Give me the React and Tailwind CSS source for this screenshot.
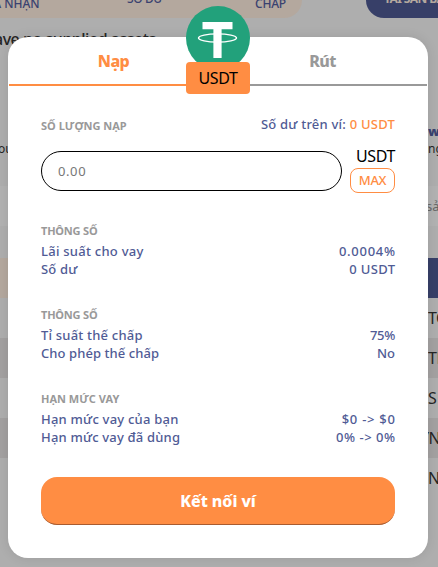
const rows = [
  { name: 'TO', shaded: false },
  { name: 'TH', shaded: true },
  { name: 'SU', shaded: false, spaced: true },
  { name: 'YN', shaded: true, clipped: true },
  { name: 'NE', shaded: false },
];

function Backdrop() {
  return (
    <div className="h-[567px] w-[438px] overflow-hidden whitespace-nowrap bg-[#aeaeae] text-[#252525]">
      <div className="flex h-[18px] justify-between overflow-hidden text-[12px] font-medium leading-[14px] text-[#3a4270]">
        <div className="flex h-[18px] w-[302px] rounded-br-[18px] bg-[#b4a89e]">
          <span className="-ml-[16px] -mt-[3px] w-[143px]">OÁ NHẬN</span>
          <span className="-mt-[8px] w-[128px] tracking-[-0.4px]">SỐ DƯ</span>
          <span className="-mt-[3px] tracking-[-0.2px]">CHẤP</span>
        </div>
        <div className="h-[18px] w-[72px] rounded-bl-[18px] bg-[#373f68] pl-[18px] font-bold text-[#b4a89e]">
          <span className="-mt-[8px] block tracking-[-0.6px]">TÀI SẢN BẢO</span>
        </div>
      </div>
      <div className="h-[105px] pt-[10px] text-[16px] font-medium leading-[22px]">
        <span className="-ml-[6px] tracking-[-0.48px]">ave no supplied assets</span>
      </div>
      <div className="flex h-[63px] justify-between text-[12px] leading-[17px]">
        <span className="-ml-[2px] pt-[17px]">ou</span>
        <div className="w-[10px]">
          <div className="text-[13px] font-black text-[#3a4270]">wi</div>
          <div>ng</div>
        </div>
      </div>
      <div className="h-10 bg-[#b2b2b2] pl-[426px] text-[13px] leading-10 text-[#666]">sản</div>
      <div className="h-8" />
      <div className="flex h-10">
        <div className="w-[219px] bg-[#b4a89e]" />
        <div className="flex-1 bg-[#373f68]" />
      </div>
      {rows.map((row) => (
        <div
          key={row.name}
          className={`h-10 text-[16px] leading-10 ${row.spaced ? 'tracking-[1px]' : 'tracking-[-0.5px]'} ${row.shaded ? 'bg-[#a3a1a1]' : ''} ${row.clipped ? 'pl-[420px]' : 'pl-[428px]'}`}
        >
          {row.name}
        </div>
      ))}
    </div>
  );
}

function Section({ title, titleClass = 'tracking-[-0.2px]', lines }) {
  return (
    <section className="h-[84px] text-[13px] font-medium leading-[18px] text-[#505b95]">
      <h3 className={`mb-[2px] text-[11px] font-bold leading-[18px] text-[#999] ${titleClass}`}>{title}</h3>
      {lines.map(([label, value, labelClass, valueClass]) => (
        <div key={label} className="flex justify-between">
          <span className={labelClass}>{label}</span>
          <span className={valueClass}>{value}</span>
        </div>
      ))}
    </section>
  );
}

function TokenBadge() {
  return (
    <div className="absolute left-[178px] top-[-31px] w-16">
      <svg className="block h-16 w-16" viewBox="0 0 64 64">
        <circle cx="32" cy="32" r="32" fill="#22a17b" />
        <ellipse cx="31.5" cy="32" rx="19" ry="4.1" fill="none" stroke="#fff" strokeWidth="1.4" />
        <path d="M16.5 16h30v7.2H35.6V52h-8.2V23.2H16.5z" fill="#fff" />
      </svg>
      <div className="relative -mt-2 h-8 rounded-[4px] bg-[#ff8d43] text-center text-[16px] leading-8 tracking-[-0.4px] text-black">USDT</div>
    </div>
  );
}

export default function App() {
  return (
    <div className="relative h-[567px] w-[438px] overflow-hidden font-['Noto_Sans','Open_Sans',sans-serif]">
      <Backdrop />
      <div className="absolute left-2 top-[37px] h-[521px] w-[420px] whitespace-nowrap rounded-[20px] bg-white shadow-[0_0_12px_rgba(0,0,0,0.1)]">
        <div className="mx-px flex h-[49px] text-center text-[16px] font-extrabold leading-[49px] tracking-[-0.6px]">
          <div className="flex-1 border-b-2 border-[#ff8d43] text-[#ff8d43]">Nạp</div>
          <div className="flex-1 border-b-2 border-[#999] text-[#999]">Rút</div>
        </div>
        <TokenBadge />
        <div className="px-[33px]">
          <div className="mt-[29px] flex h-[20px] justify-between">
            <span className="pt-[2px] text-[11px] font-bold leading-[18px] tracking-[0.02px] text-[#999]">SỐ LƯỢNG NẠP</span>
            <span className="text-[13px] font-medium leading-[19px] tracking-[0.22px] text-[#505b95]">
              Số dư trên ví: <span className="text-[#ff8d43]">0 USDT</span>
            </span>
          </div>
          <div className="mt-[16px] flex h-10 justify-between">
            <input
              className="h-10 w-[301px] rounded-[20px] border border-black px-4 text-[13px] tracking-[0.6px] outline-none placeholder:text-[#777]"
              placeholder="0.00"
            />
            <div className="flex flex-col items-end">
              <span className="-mt-[6px] h-[23px] shrink-0 text-[16px] leading-[22px] tracking-[-0.4px] text-black">USDT</span>
              <button className="h-[25px] w-[45px] shrink-0 rounded-[8px] border border-[#ff8d43] text-[13px] font-medium leading-[23px] tracking-[-0.3px] text-[#ff8d43]">MAX</button>
            </div>
          </div>
          <div className="pt-[31px]">
            <Section
              title="THÔNG SỐ"
              lines={[
                ['Lãi suất cho vay', '0.0004%', 'tracking-[0.25px]', 'tracking-[0.7px] -mr-[0.7px]'],
                ['Số dư', '0 USDT', 'tracking-[0.2px]', 'tracking-[0.35px] -mr-[0.35px]'],
              ]}
            />
            <Section
              title="THÔNG SỐ"
              lines={[
                ['Tỉ suất thế chấp', '75%', 'tracking-[0.2px]', 'tracking-[-0.3px]'],
                ['Cho phép thế chấp', 'No', 'tracking-[0.08px]', ''],
              ]}
            />
            <Section
              title="HẠN MỨC VAY"
              titleClass="tracking-[0px]"
              lines={[
                ['Hạn mức vay của bạn', '$0 -> $0', 'tracking-[0.22px]', 'tracking-[0.75px] -mr-[0.75px]'],
                ['Hạn mức vay đã dùng', '0% -> 0%', 'tracking-[0.18px]', 'tracking-[0.5px] -mr-[0.5px]'],
              ]}
            />
          </div>
          <button className="mt-[3px] block h-12 w-full rounded-[16px] border-b border-[#a95c30] bg-[#ff8d43] text-[16px] font-extrabold leading-[48px] tracking-[-0.05px] text-white">Kết nối ví</button>
        </div>
      </div>
    </div>
  );
}
